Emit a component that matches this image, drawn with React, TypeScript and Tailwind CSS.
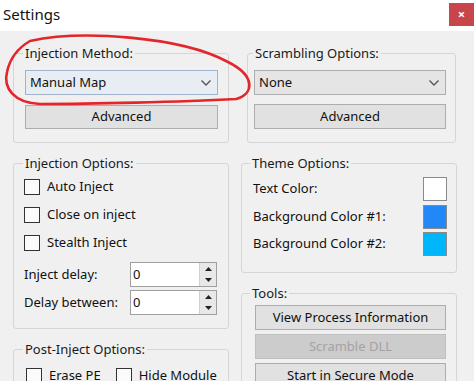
import React from "react";

const font = { fontFamily: '"Noto Sans", "Open Sans", sans-serif' };

function Group({
  title,
  className,
  legendClass,
  children,
}: {
  title: string;
  className?: string;
  legendClass?: string;
  children: React.ReactNode;
}) {
  return (
    <fieldset className={"border border-[#d5d5d5] rounded-[3px] " + (className ?? "")}>
      <legend
        className={
          "px-[2px] text-[13px] leading-[18px] text-[#1a1a1a] " + (legendClass ?? "ml-[-2px]")
        }
      >
        {title}
      </legend>
      {children}
    </fieldset>
  );
}

function Chevron() {
  return (
    <svg width="12" height="8" viewBox="0 0 12 8" className="shrink-0">
      <path d="M1.5 1.5 L6 6 L10.5 1.5" fill="none" stroke="#555" strokeWidth="1.4" />
    </svg>
  );
}

function Combo({ value, focused }: { value: string; focused?: boolean }) {
  return (
    <div
      className={
        "h-[25px] flex items-center justify-between pl-[4px] pr-[5px] text-[13px] text-[#111] border " +
        (focused ? "bg-[#e8edf3] border-[#9fb3cc]" : "bg-[#e5e5e5] border-[#adadad]")
      }
    >
      <span>{value}</span>
      <Chevron />
    </div>
  );
}

function Button({ label, disabled, h }: { label: string; disabled?: boolean; h: string }) {
  return (
    <div
      className={
        "flex items-center justify-center text-[13px] border " +
        h +
        " " +
        (disabled
          ? "bg-[#cccccc] border-[#bfbfbf] text-[#a3a3a3]"
          : "bg-[#e1e1e1] border-[#adadad] text-[#111]")
      }
    >
      {label}
    </div>
  );
}

function Check({ label }: { label: string }) {
  return (
    <div className="flex items-center gap-[7px] h-[28px]">
      <div className="w-[16px] h-[16px] border border-[#333] bg-[#fbfbfb]" />
      <span className="text-[13px] text-[#111]">{label}</span>
    </div>
  );
}

function Spin({ label }: { label: string }) {
  return (
    <div className="flex items-center h-[25px]">
      <span className="w-[106px] text-[13px] text-[#111]">{label}</span>
      <div className="flex-1 h-full flex border border-[#a0a0a0] bg-white">
        <span className="flex-1 pl-[2px] text-[13px] leading-[23px] text-[#111]">0</span>
        <div className="w-[17px] flex flex-col bg-[#e8e8e8] border-l border-[#d0d0d0]">
          <div className="flex-1 flex items-center justify-center">
            <svg width="7" height="4" viewBox="0 0 7 4">
              <path d="M0 4 L3.5 0 L7 4 Z" fill="#222" />
            </svg>
          </div>
          <div className="flex-1 flex items-center justify-center">
            <svg width="7" height="4" viewBox="0 0 7 4">
              <path d="M0 0 L3.5 4 L7 0 Z" fill="#222" />
            </svg>
          </div>
        </div>
      </div>
    </div>
  );
}

function Swatch({ label, color }: { label: string; color: string }) {
  return (
    <div className="flex items-center justify-between h-[24px]">
      <span className="text-[13px] text-[#111]">{label}</span>
      <div className={"w-[24px] h-[24px] border border-[#8a8a8a] " + color} />
    </div>
  );
}

export default function App() {
  return (
    <div className="relative w-[474px] h-[381px] overflow-hidden bg-[#f0f0f0]" style={font}>
      <div className="h-[31px] bg-white flex items-start justify-between">
        <span className="pl-[3px] pt-[4px] text-[15px] leading-[21px] text-[#111]">Settings</span>
        <div className="mt-[3px] w-[25px] h-[23px] bg-[#c9454c] flex items-center justify-center text-white text-[13px] font-bold leading-none">
          ×
        </div>
      </div>

      <div className="flex gap-[12px] pl-[13px] pt-[13px]">
        {/* Left column */}
        <div className="w-[216px] flex flex-col gap-[11px]">
          <Group title="Injection Method:" className="pl-[11px] pr-[10px] pt-[8px] pb-[13px]">
            <div className="flex flex-col gap-[10px]">
              <Combo value="Manual Map" focused />
              <Button label="Advanced" h="h-[24px]" />
            </div>
          </Group>

          <Group title="Injection Options:" className="pl-[10px] pr-[11px] pt-[1px] pb-[13px]" legendClass="ml-[-1px]">
            <Check label="Auto Inject" />
            <Check label="Close on inject" />
            <Check label="Stealth Inject" />
            <div className="flex flex-col gap-[3px] mt-[5px]">
              <Spin label="Inject delay:" />
              <Spin label="Delay between:" />
            </div>
          </Group>

          <Group title="Post-Inject Options:" className="pl-[12px] pr-[10px] pt-[4px] pb-[13px]" legendClass="ml-[-3px]">
            <div className="flex gap-[15px]">
              <Check label="Erase PE" />
              <Check label="Hide Module" />
            </div>
          </Group>
        </div>

        {/* Right column */}
        <div className="w-[216px] flex flex-col gap-[11px]">
          <Group title="Scrambling Options:" className="ml-[6px] mr-[1px] pl-[6px] pr-[9px] pt-[8px] pb-[13px]" legendClass="ml-[-1px]">
            <div className="flex flex-col gap-[9px]">
              <Combo value="None" />
              <Button label="Advanced" h="h-[25px]" />
            </div>
          </Group>

          <Group title="Theme Options:" className="pl-[11px] pr-[9px] pt-[5px] pb-[16px]" legendClass="ml-[-3px]">
            <div className="flex flex-col gap-[3.5px]">
              <Swatch label="Text Color:" color="bg-white" />
              <Swatch label="Background Color #1:" color="bg-[#2288f8]" />
              <Swatch label="Background Color #2:" color="bg-[#00b6fb]" />
            </div>
          </Group>

          <Group title="Tools:" className="pl-[13px] pr-[10px] pt-[3px] pb-[13px]" legendClass="ml-[-5px]">
            <div className="flex flex-col gap-[4px]">
              <Button label="View Process Information" h="h-[25px]" />
              <Button label="Scramble DLL" disabled h="h-[25px]" />
              <Button label="Start in Secure Mode" h="h-[25px]" />
            </div>
          </Group>
        </div>
      </div>

      {/* hand-drawn red annotation */}
      <svg
        className="absolute left-0 top-0 pointer-events-none"
        width="474"
        height="381"
        viewBox="0 0 474 381"
      >
        <path
          d="M30 41 C 80 30, 180 36, 228 62 C 256 76, 254 94, 236 99 C 180 102, 90 104, 40 104 C 14 103, 3 88, 7 72 C 10 58, 18 48, 30 41"
          fill="none"
          stroke="#e3262b"
          strokeWidth="2.6"
          strokeLinecap="round"
        />
      </svg>
    </div>
  );
}
